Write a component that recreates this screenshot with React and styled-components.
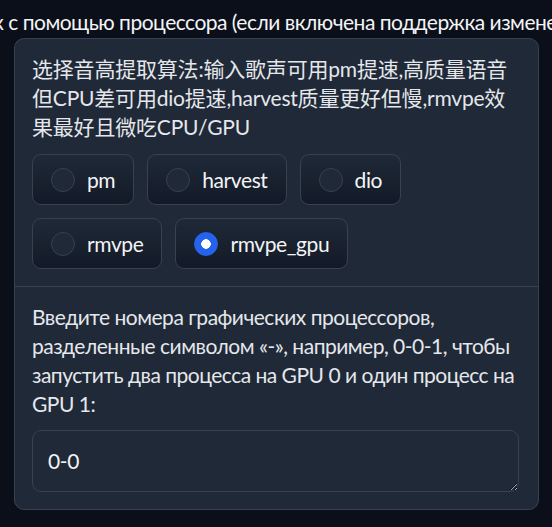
import React, { useState } from 'react';
import styled, { createGlobalStyle } from 'styled-components';

const FONT = `"Lato", "Noto Sans CJK SC", sans-serif`;

const GlobalStyle = createGlobalStyle`
  html, body {
    margin: 0;
    padding: 0;
    background: #0b0f19;
    overflow: hidden;
  }
  body {
    font-family: ${FONT};
    color: #f3f4f6;
  }
`;

const ALGORITHMS = ['pm', 'harvest', 'dio', 'rmvpe', 'rmvpe_gpu'];

const App = () => {
  const [algo, setAlgo] = useState('rmvpe_gpu');

  return (
    <Page>
      <GlobalStyle />
      <CutLine>к с помощью процессора (если включена поддержка изменения высоты тона)</CutLine>
      <Form>
        <Block>
          <Label $tight={0.2} $overhang={0}>
            选择音高提取算法:输入歌声可用pm提速,高质量语音但CPU差可用dio提速,harvest质量更好但慢,rmvpe效果最好且微吃CPU/GPU
          </Label>
          <Choices>
            {ALGORITHMS.map((name) => (
              <Choice key={name} onClick={() => setAlgo(name)}>
                <Dot $checked={algo === name} />
                {name}
              </Choice>
            ))}
          </Choices>
        </Block>
        <Block>
          <Label $tight={0.5} $overhang={10}>
            Введите номера графических процессоров, разделенные символом «-», например, 0-0-1, чтобы запустить два процесса на GPU 0 и один процесс на GPU 1:
          </Label>
          <Field rows={1} defaultValue="0-0" />
        </Block>
      </Form>
    </Page>
  );
};

const Page = styled.div`
  display: flex;
  flex-direction: column;
  width: 552px;
  height: 527px;
`;

const CutLine = styled.div`
  height: 38px;
  line-height: 44px;
  margin-left: -7px;
  font-size: 21px;
  letter-spacing: -0.5px;
  white-space: nowrap;
  color: #f3f4f6;
`;

const Form = styled.div`
  margin-left: 14px;
  width: 523px;
  display: flex;
  flex-direction: column;
  gap: 1px;
  background: #374151;
  border: 1px solid #374151;
  border-radius: 10px;
  overflow: hidden;
`;

const Block = styled.div`
  background: #1f2937;
  padding: 15px 19px 17px 17px;
  display: flex;
  flex-direction: column;
`;

const Label = styled.div`
  font-size: 21px;
  line-height: 29px;
  letter-spacing: ${(p) => -p.$tight}px;
  color: #e5e7eb;
  margin: 0 ${(p) => -p.$overhang}px 13px 0;
`;

const Choices = styled.div`
  display: flex;
  flex-wrap: wrap;
  gap: 13px;
`;

const Choice = styled.label`
  display: flex;
  align-items: center;
  gap: 12px;
  height: 51px;
  box-sizing: border-box;
  padding: 0 18px 0 18px;
  border: 1px solid #374151;
  border-radius: 9px;
  background: linear-gradient(to top, #131a27, #1f2937);
  font-size: 21px;
  letter-spacing: -0.4px;
  color: #f3f4f6;
  cursor: pointer;
`;

const Dot = styled.span`
  width: 24px;
  height: 24px;
  box-sizing: border-box;
  border-radius: 50%;
  border: 1px solid ${(p) => (p.$checked ? '#2563eb' : '#374151')};
  background: ${(p) =>
    p.$checked ? 'radial-gradient(circle, #ffffff 0 4.5px, #2563eb 5px)' : '#1f2937'};
`;

const Field = styled.textarea`
  display: block;
  margin-top: -1px;
  height: 62px;
  box-sizing: border-box;
  padding: 15px 15px;
  border: 1px solid #374151;
  border-radius: 9px;
  background: #1f2937;
  color: #f3f4f6;
  font-family: ${FONT};
  font-size: 21px;
  line-height: 29px;
  letter-spacing: -0.4px;
  color-scheme: dark;
  outline: none;
  resize: vertical;
`;

export default App;
